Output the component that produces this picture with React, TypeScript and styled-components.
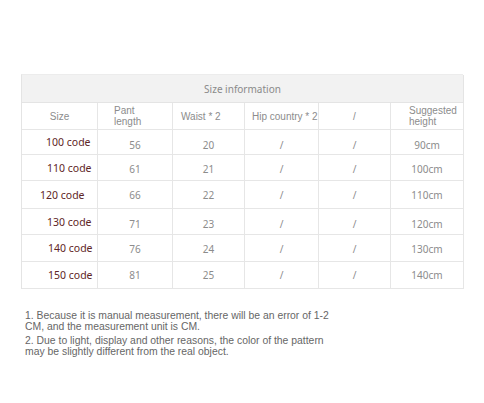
import React from "react";
import styled, { createGlobalStyle } from "styled-components";

const Global = createGlobalStyle`
  html, body { margin: 0; padding: 0; background: #fff; }
  body { font-family: "Noto Sans", "Liberation Sans", sans-serif; }
`;

const Page = styled.div`
  width: 484px;
  height: 403px;
  padding: 74px 0 0 21px;
  box-sizing: border-box;
  display: flex;
  flex-direction: column;
`;

const Table = styled.div`
  display: grid;
  grid-template-columns: 76px 75px 72px 74px 72px 73px;
  grid-template-rows: 28px 27px 25px 26px 28px 26px 27px 27px;
  width: 442px;
  border-left: 1px solid #e4e4e4;
  border-top: 1px solid #ececec;
  box-sizing: border-box;
`;

const Title = styled.div`
  grid-column: 1 / -1;
  background: #f2f2f2;
  border-right: 1px solid #e4e4e4;
  border-bottom: 1px solid #e4e4e4;
  display: flex;
  align-items: center;
  justify-content: center;
  font-size: 10px;
  color: #8a8a8a;
`;

const Cell = styled.div<{ $align?: "left" | "center"; $pad?: number; $dy?: number }>`
  border-right: 1px solid #e6e6e6;
  border-bottom: 1px solid #e6e6e6;
  display: flex;
  align-items: center;
  justify-content: ${(p) => (p.$align === "left" ? "flex-start" : "center")};
  padding-left: ${(p) => p.$pad ?? 0}px;
  padding-top: ${(p) => (p.$dy ? p.$dy * 2 : 0)}px;
  box-sizing: border-box;
  font-size: 10px;
  color: #8c8c8c;
  white-space: nowrap;
  overflow: visible;
  position: relative;
  z-index: 1;
`;

const HeadText = styled.span`
  font-family: "Liberation Sans", "Noto Sans", sans-serif;
  font-size: 10px;
  line-height: 11px;
  color: #8c8c8c;
  white-space: nowrap;
`;

const SizeLabel = styled.span`
  font-size: 10.5px;
  color: #5e2525;
`;

const Notes = styled.div`
  margin-top: 21px;
  padding-left: 4px;
  display: flex;
  flex-direction: column;
  gap: 3px;
  font-family: "Liberation Sans", "Noto Sans", sans-serif;
  font-size: 10.4px;
  line-height: 11px;
  color: #666;
`;

const Note = styled.p`
  margin: 0;
`;

const rows = [
  { size: "100 code", pad: 24, len: "56", waist: "20", h: "90cm", dy: 3, ldy: -1 },
  { size: "110 code", pad: 25, len: "61", waist: "21", h: "100cm", dy: 1, ldy: 0 },
  { size: "120 code", pad: 18, len: "66", waist: "22", h: "110cm", dy: 0, ldy: 0 },
  { size: "130 code", pad: 25, len: "71", waist: "23", h: "120cm", dy: 2, ldy: 0 },
  { size: "140 code", pad: 26, len: "76", waist: "24", h: "130cm", dy: 1, ldy: 0 },
  { size: "150 code", pad: 26, len: "81", waist: "25", h: "140cm", dy: 0, ldy: 0 },
];

export default function App() {
  return (
    <>
      <Global />
      <Page>
        <Table>
          <Title>Size information</Title>
          <Cell>
            <HeadText>Size</HeadText>
          </Cell>
          <Cell $align="left" $pad={16}>
            <HeadText>
              Pant
              <br />
              length
            </HeadText>
          </Cell>
          <Cell $align="left" $pad={8}>
            <HeadText>Waist * 2</HeadText>
          </Cell>
          <Cell $align="left" $pad={7}>
            <HeadText>Hip country * 2</HeadText>
          </Cell>
          <Cell>
            <HeadText>/</HeadText>
          </Cell>
          <Cell $align="left" $pad={18}>
            <HeadText>
              Suggested
              <br />
              height
            </HeadText>
          </Cell>
          {rows.map((r) => (
            <React.Fragment key={r.size}>
              <Cell $align="left" $pad={r.pad} style={{ marginTop: r.ldy }}>
                <SizeLabel>{r.size}</SizeLabel>
              </Cell>
              <Cell $dy={r.dy}>{r.len}</Cell>
              <Cell $dy={r.dy}>{r.waist}</Cell>
              <Cell $dy={r.dy}>/</Cell>
              <Cell $dy={r.dy}>/</Cell>
              <Cell $dy={r.dy}>{r.h}</Cell>
            </React.Fragment>
          ))}
        </Table>
        <Notes>
          <Note>
            1. Because it is manual measurement, there will be an error of 1-2
            <br />
            CM, and the measurement unit is CM.
          </Note>
          <Note>
            2. Due to light, display and other reasons, the color of the pattern
            <br />
            may be slightly different from the real object.
          </Note>
        </Notes>
      </Page>
    </>
  );
}
